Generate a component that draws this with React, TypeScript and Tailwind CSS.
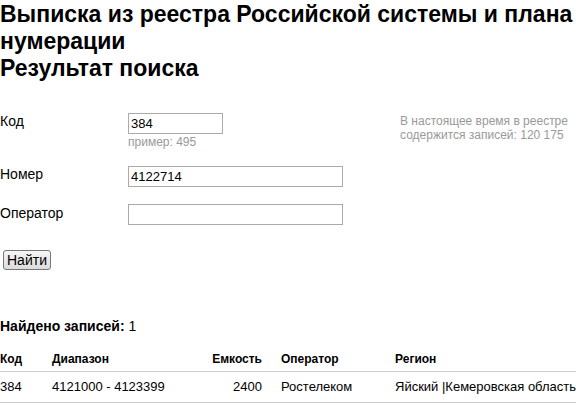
import React from 'react';

const rows = [
  { code: '384', range: '4121000 - 4123399', capacity: '2400', operator: 'Ростелеком', region: 'Яйский |Кемеровская область' },
];

const App: React.FC = () => {
  return (
    <div className="w-[576px] h-[405px] overflow-hidden bg-white text-black font-['Liberation_Sans',Arial,sans-serif]">
      <h1 className="pt-[1px] text-[23px] leading-[27px] font-bold">
        Выписка из реестра Российской системы и плана нумерации
        <br />
        Результат поиска
      </h1>

      {/* Search form */}
      <div className="relative mt-[31px] text-[14px]">
        <div className="absolute left-[400px] top-[1px] w-[176px] text-[12px] leading-[14px] text-[#999]">
          В настоящее время в реестре содержится записей: 120 175
        </div>

        <div className="flex">
          <label className="w-[128px] pt-[0px] leading-[16px]">Код</label>
          <div className="flex flex-col">
            <input
              defaultValue="384"
              className="w-[95px] h-[21px] border border-[#aaa] px-[2px] text-[13px] outline-none"
            />
            <span className="mt-[1px] text-[12px] leading-[14px] text-[#999]">пример: 495</span>
          </div>
        </div>

        <div className="flex mt-[17px]">
          <label className="w-[128px] pt-[0px] leading-[16px]">Номер</label>
          <input
            defaultValue="4122714"
            className="w-[215px] h-[21px] border border-[#aaa] px-[2px] text-[13px] outline-none"
          />
        </div>

        <div className="flex mt-[17px]">
          <label className="w-[128px] pt-[1px] leading-[16px]">Оператор</label>
          <input className="w-[215px] h-[21px] border border-[#aaa] px-[2px] text-[13px] outline-none" />
        </div>

        <button className="mt-[25px] ml-[3px] h-[20px] px-[3px] text-[14px] leading-[16px] border border-[#777] rounded-[3px] bg-gradient-to-b from-[#f6f6f6] to-[#dcdcdc]">
          Найти
        </button>
      </div>

      {/* Results */}
      <div className="mt-[47px] text-[14px] leading-[16px]">
        <span className="font-bold">Найдено записей:</span> 1
      </div>

      <div className="mt-[18px] text-[12px]">
        <div className="grid grid-cols-[52px_143px_67px_133px_1fr] border-b border-[#ccc] font-bold leading-[15px] pb-[4px]">
          <div>Код</div>
          <div>Диапазон</div>
          <div className="text-right">Емкость</div>
          <div className="pl-[19px]">Оператор</div>
          <div>Регион</div>
        </div>
        {rows.map((r) => (
          <div
            key={r.code + r.range}
            className="grid grid-cols-[52px_143px_67px_133px_1fr] border-b border-[#ccc] text-[13px] leading-[16px] pt-[7px] pb-[7px]"
          >
            <div>{r.code}</div>
            <div>{r.range}</div>
            <div className="text-right">{r.capacity}</div>
            <div className="pl-[19px]">{r.operator}</div>
            <div className="whitespace-nowrap">{r.region}</div>
          </div>
        ))}
      </div>
    </div>
  );
};

export default App;
